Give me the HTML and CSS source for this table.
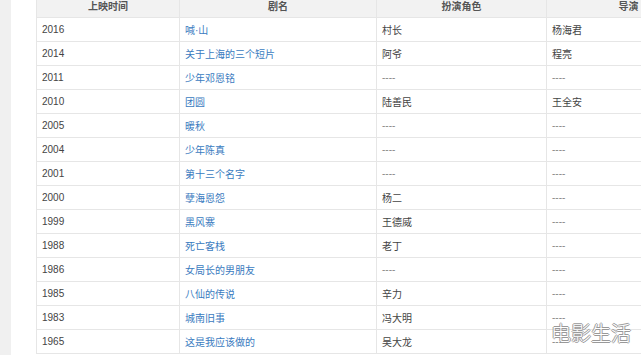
FILE: index.html
```html
<!DOCTYPE html>
<html lang="zh">
<head>
<meta charset="utf-8">
<link rel="stylesheet" href="styles.css">
</head>
<body>
<div class="page">
  <div class="side"></div>
  <div class="main">
    <table class="films">
      <colgroup>
        <col class="c1"><col class="c2"><col class="c3"><col class="c4">
      </colgroup>
      <thead>
        <tr><th>上映时间</th><th>剧名</th><th>扮演角色</th><th>导演</th></tr>
      </thead>
      <tbody>
        <tr><td>2016</td><td><a>喊·山</a></td><td>村长</td><td>杨海君</td></tr>
        <tr><td>2014</td><td><a>关于上海的三个短片</a></td><td>阿爷</td><td>程亮</td></tr>
        <tr><td>2011</td><td><a>少年邓恩铭</a></td><td class="na">----</td><td class="na">----</td></tr>
        <tr><td>2010</td><td><a>团圆</a></td><td>陆善民</td><td>王全安</td></tr>
        <tr><td>2005</td><td><a>暖秋</a></td><td class="na">----</td><td class="na">----</td></tr>
        <tr><td>2004</td><td><a>少年陈真</a></td><td class="na">----</td><td class="na">----</td></tr>
        <tr><td>2001</td><td><a>第十三个名字</a></td><td class="na">----</td><td class="na">----</td></tr>
        <tr><td>2000</td><td><a>孽海恩怨</a></td><td>杨二</td><td class="na">----</td></tr>
        <tr><td>1999</td><td><a>黑风寨</a></td><td>王德威</td><td class="na">----</td></tr>
        <tr><td>1988</td><td><a>死亡客栈</a></td><td>老丁</td><td class="na">----</td></tr>
        <tr><td>1986</td><td><a>女局长的男朋友</a></td><td class="na">----</td><td class="na">----</td></tr>
        <tr><td>1985</td><td><a>八仙的传说</a></td><td>辛力</td><td class="na">----</td></tr>
        <tr><td>1983</td><td><a>城南旧事</a></td><td>冯大明</td><td class="na">----</td></tr>
        <tr><td>1965</td><td><a>这是我应该做的</a></td><td>吴大龙</td><td class="na">----</td></tr>
      </tbody>
    </table>
  </div>
</div>
<div class="watermark">电影生活</div>
</body>
</html>
```
FILE: styles.css
```css
html, body {
  margin: 0;
  padding: 0;
  background: #ffffff;
  overflow: hidden;
  width: 641px;
  height: 355px;
}
body {
  font-family: "Liberation Sans", "Noto Sans CJK SC", sans-serif;
  font-size: 10px;
  color: #444;
  position: relative;
}
.page {
  display: flex;
  height: 355px;
  overflow: hidden;
}
.side {
  width: 11px;
  flex: none;
  background: #f0f0f0;
}
.main {
  padding-left: 25px;
  flex: none;
}
.films {
  border-collapse: collapse;
  table-layout: fixed;
  width: 674px;
  margin-top: -7px;
}
.c1 { width: 143px; }
.c2 { width: 197px; }
.c3 { width: 170px; }
.c4 { width: 164px; }
.films th, .films td {
  border: 1px solid #e6e6e6;
  height: 24px;
  padding: 0;
  box-sizing: border-box;
}
.films th {
  background: #f2f2f2;
  color: #555;
  font-weight: bold;
  text-align: center;
}
.films td {
  text-align: left;
  padding-left: 5px;
  white-space: nowrap;
}
.films a {
  color: #3a7bc0;
  text-decoration: none;
}
.films td.na {
  color: #888;
}
.watermark {
  position: absolute;
  left: 551px;
  top: 318px;
  font-size: 20px;
  font-family: "Noto Sans CJK SC", sans-serif;
  font-weight: 300;
  color: #ffffff;
  text-shadow: -1px 0 0 #999, 1px 0 0 #999, 0 -1px 0 #999, 0 1px 0 #999;
}
```
